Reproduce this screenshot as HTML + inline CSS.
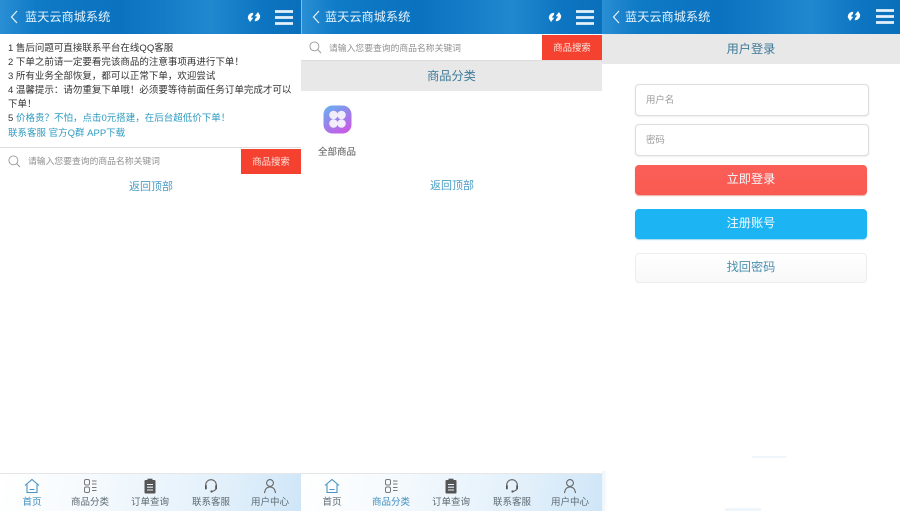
<!DOCTYPE html>
<html lang="zh"><head><meta charset="utf-8"><title>蓝天云商城系统</title>
<style>
*{margin:0;padding:0;box-sizing:border-box}
html,body{width:900px;height:511px;overflow:hidden;background:#fff}
body{position:relative;font-family:"Liberation Sans","Noto Sans CJK SC",sans-serif;color:#333}
#w{position:absolute;left:0;top:0;width:900px;height:511px;filter:blur(.3px)}
.a{position:absolute;white-space:nowrap}
.hd{position:absolute;top:0;height:34px;background:linear-gradient(90deg,#2a8fd4 0,#0f7ac6 12%,#0a72bf 40%,#1f88cf 70%,#0c74c0 88%,#0b70bc 100%)}
.t{position:absolute;top:9px;left:25px;font-size:12.2px;line-height:17px;color:#e8f4fc;z-index:2}
.hd svg{position:absolute;z-index:2}
.n{left:8px;font-size:9.5px;line-height:14px;color:#333}
.n i{font-style:normal;color:#2f9bc0}
.sb{position:absolute;height:25px;width:60px;background:#f44130;color:#fbe3dc;font-size:9.4px;line-height:25px;text-align:center}
.ph{font-size:8.8px;line-height:14px;color:#8f8f8f}
.bk{font-size:11px;line-height:16px;color:#4a9dc4}
.band{position:absolute;height:30px;background:#e8e8e8;color:#3f7a98;font-size:12.2px;line-height:30px;text-align:center}
.ft{position:absolute;top:473px;height:38px;width:301px;border-top:1px solid #e6e6e6;background:linear-gradient(100deg,#fff 0,#f3f9fd 35%,#e4f1fb 70%,#cfe6f8 100%)}
.ft div{position:absolute;top:0;width:60px;text-align:center}
.ft svg{position:absolute;left:22px;top:4px}
.ft span{position:absolute;left:0;right:0;top:22px;font-size:9.5px;line-height:14px;color:#5d6a72}
.ft .on span{color:#3f8fc0}
.inp{position:absolute;left:635px;width:234px;height:32px;border:1px solid #dcdcdc;border-radius:4px;box-shadow:0 1px 2px #eee;font-size:9.4px;line-height:30px;padding-left:10px;color:#9a9a9a;background:#fff}
.btn{position:absolute;left:635px;width:232px;height:30px;border-radius:4px;font-size:12.2px;line-height:29px;text-align:center;color:#f4fbff}
</style></head>
<body>
<svg width="0" height="0" style="position:absolute">
<symbol id="ref" viewBox="0 0 14 12"><path d="M.8 7.300C.8 4 3 1.800 6.300 1.800L5.800 4.200C4.700 4.600 4.200 5.500 4.300 6.700H6.300L3 11z" fill="#fff"/><path d="M13.200 4.700C13.200 8 11 10.200 7.700 10.200L8.200 7.800C9.300 7.400 9.800 6.500 9.700 5.300H7.700L11 1z" fill="#fff"/></symbol>
<symbol id="home" viewBox="0 0 16 16"><path d="M1 7.500 8 1.500l7 6M3 6.500V14.500H13V6.500M5.500 11.500H10.500" fill="none" stroke="#4a93c4" stroke-width="1.100"/></symbol>
<symbol id="cat" viewBox="0 0 16 16"><g fill="none" stroke="#777" stroke-width="1"><rect x="2.500" y="1.500" width="5" height="5.500" rx="1.500"/><rect x="2.500" y="9" width="5" height="5.500" rx="1.500"/><path d="M10 3H14.500M10 6H14.500M10 9.500H14.500M10 12.500H14.500"/></g></symbol>
<symbol id="ord" viewBox="0 0 16 16"><rect x="2.500" y="2" width="11" height="13.500" rx="1" fill="#555"/><rect x="5.500" y=".7" width="5" height="2.600" fill="#555"/><path d="M5 6.500H11M5 9.200H11M5 12H11" stroke="#e8f2fa" stroke-width="1.100"/></symbol>
<symbol id="svc" viewBox="0 0 16 16"><g fill="none" stroke="#666" stroke-width="1.100"><path d="M2.700 9V7a5.300 5.300 0 0 1 10.600 0v2"/><path d="M13.300 9c0 2.500-2 4-4.500 4.500"/></g><rect x="2" y="7" width="1.800" height="4.500" rx=".9" fill="#555"/><rect x="12.200" y="7" width="1.800" height="4.500" rx=".9" fill="#555"/><circle cx="8.500" cy="13.500" r="1.100" fill="#555"/></symbol>
<symbol id="usr" viewBox="0 0 16 16"><g fill="none" stroke="#666" stroke-width="1.100"><circle cx="8" cy="5" r="3.400"/><path d="M2.500 15c.5-3.800 2.500-6 5.500-6s5 2.200 5.500 6"/></g></symbol>
<symbol id="mag" viewBox="0 0 14 14"><circle cx="5.800" cy="5.800" r="4.800" fill="none" stroke="#999" stroke-width="1"/><path d="M9.200 9.200 13 13" stroke="#999" stroke-width="1.100"/></symbol>
<symbol id="chev" viewBox="0 0 8 14"><path d="M7 1 1.500 7 7 13" fill="none" stroke="#e8f4fc" stroke-width="1.200"/></symbol>
<symbol id="menu" viewBox="0 0 18 15"><path d="M0 1.500H18M0 7.500H18M0 13.500H18" stroke="#e4f1fa" stroke-width="2.700"/></symbol>
</svg>
<div id="w">
<!-- headers -->
<div class="hd" style="left:0;width:301px"><svg style="left:10px;top:10px" width="8" height="14"><use href="#chev"/></svg><div class="t">蓝天云商城系统</div><svg style="left:247px;top:11px" width="14" height="12"><use href="#ref"/></svg><svg style="left:275px;top:10px" width="18" height="15"><use href="#menu"/></svg></div>
<div class="hd" style="left:301px;width:301px;box-shadow:inset 1px 0 0 #7dbde6"><svg style="left:11px;top:10px" width="8" height="14"><use href="#chev"/></svg><div class="t" style="left:24px">蓝天云商城系统</div><svg style="left:247px;top:11px" width="14" height="12"><use href="#ref"/></svg><svg style="left:275px;top:10px" width="18" height="15"><use href="#menu"/></svg></div>
<div class="hd" style="left:602px;width:298px"><svg style="left:10px;top:10px" width="8" height="14"><use href="#chev"/></svg><div class="t" style="left:23px">蓝天云商城系统</div><svg style="left:245px;top:10px" width="14" height="12"><use href="#ref"/></svg><svg style="left:274px;top:9px" width="18" height="15"><use href="#menu"/></svg></div>

<!-- panel 1 -->
<div class="a n" style="top:41px;margin-top:1px">1 售后问题可直接联系平台在线QQ客服</div>
<div class="a n" style="top:56px">2 下单之前请一定要看完该商品的注意事项再进行下单！</div>
<div class="a n" style="top:70px">3 所有业务全部恢复，都可以正常下单，欢迎尝试</div>
<div class="a n" style="top:84px">4 温馨提示：请勿重复下单哦！必须要等待前面任务订单完成才可以</div>
<div class="a n" style="top:98px">下单！</div>
<div class="a n" style="top:112px">5 <i>价格贵？不怕，点击0元搭建，在后台超低价下单！</i></div>
<div class="a n" style="top:127px"><i>联系客服 官方Q群 APP下载</i></div>
<div class="a" style="left:0;top:147px;width:301px;height:1px;background:#ddd"></div>
<svg class="a" style="left:8px;top:155px" width="13" height="13"><use href="#mag"/></svg>
<div class="a ph" style="left:28px;top:154px">请输入您要查询的商品名称关键词</div>
<div class="sb" style="left:241px;top:149px">商品搜索</div>
<div class="a bk" style="left:129px;top:179px">返回顶部</div>

<!-- panel 2 -->
<svg class="a" style="left:309px;top:41px" width="13" height="13"><use href="#mag"/></svg>
<div class="a ph" style="left:329px;top:41px">请输入您要查询的商品名称关键词</div>
<div class="sb" style="left:542px;top:35px">商品搜索</div>
<div class="a" style="left:301px;top:60px;width:301px;height:1px;background:#ddd"></div>
<div class="band" style="left:301px;top:61px;width:301px">商品分类</div>
<svg class="a" style="left:322px;top:104px" width="31" height="31" viewBox="0 0 31 31">
<defs><linearGradient id="g" x1="0" y1="0" x2=".6" y2="1"><stop offset="0" stop-color="#62b4f0"/><stop offset="1" stop-color="#c45ee6"/></linearGradient></defs>
<rect x="1.500" y="1.500" width="28" height="28" rx="9" fill="url(#g)"/>
<g fill="#f2edfc"><circle cx="11.500" cy="11" r="4.300"/><circle cx="19.500" cy="11" r="4.300"/><circle cx="11.500" cy="19.500" r="4.300"/><circle cx="19.500" cy="19.500" r="4.300"/></g></svg>
<div class="a" style="left:318px;top:146px;font-size:9.5px;line-height:14px;color:#555">全部商品</div>
<div class="a bk" style="left:430px;top:178px">返回顶部</div>

<!-- panel 3 -->
<div class="band" style="left:602px;top:34px;width:298px">用户登录</div>
<div class="inp" style="top:84px">用户名</div>
<div class="inp" style="top:124px">密码</div>
<div class="btn" style="top:165px;background:linear-gradient(180deg,#fb5f57,#f95a52);box-shadow:0 1px 1px #e8a8a4">立即登录</div>
<div class="btn" style="top:209px;background:#1cb4f2;box-shadow:0 1px 1px #9cd8f0">注册账号</div>
<div class="btn" style="top:253px;background:linear-gradient(180deg,#fff,#f8f8f8);border:1px solid #ececec;color:#4b8fb0;line-height:27px">找回密码</div>
<div class="a" style="left:752px;top:456px;width:34px;height:2px;background:#eef6fb"></div>
<div class="a" style="left:602px;top:471px;width:6px;height:40px;background:linear-gradient(90deg,#eaf4fb,#fff)"></div>
<div class="a" style="left:725px;top:508px;width:36px;height:3px;background:#eef6fb"></div>

<!-- footers -->
<div class="ft" style="left:0">
<div class="on" style="left:2px"><svg width="16" height="16"><use href="#home"/></svg><span>首页</span></div>
<div style="left:60px"><svg width="16" height="16"><use href="#cat"/></svg><span>商品分类</span></div>
<div style="left:120px"><svg width="16" height="16"><use href="#ord"/></svg><span>订单查询</span></div>
<div style="left:181px"><svg width="16" height="16"><use href="#svc"/></svg><span>联系客服</span></div>
<div style="left:240px"><svg width="16" height="16"><use href="#usr"/></svg><span>用户中心</span></div>
</div>
<div class="ft" style="left:301px">
<div style="left:1px"><svg width="16" height="16"><use href="#home"/></svg><span>首页</span></div>
<div class="on" style="left:60px"><svg width="16" height="16"><use href="#cat"/></svg><span>商品分类</span></div>
<div style="left:120px"><svg width="16" height="16"><use href="#ord"/></svg><span>订单查询</span></div>
<div style="left:181px"><svg width="16" height="16"><use href="#svc"/></svg><span>联系客服</span></div>
<div style="left:239px"><svg width="16" height="16"><use href="#usr"/></svg><span>用户中心</span></div>
</div>
</div>
</body></html>
